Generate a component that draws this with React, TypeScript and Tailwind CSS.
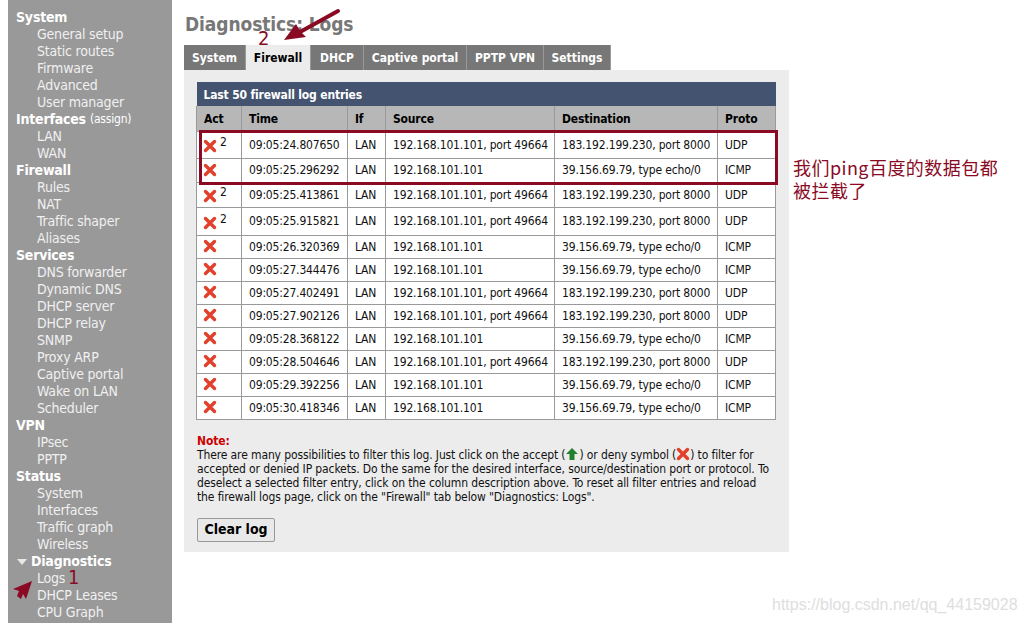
const menu: [string, string[]][] = [
  ["System", ["General setup", "Static routes", "Firmware", "Advanced", "User manager"]],
  ["Interfaces", ["LAN", "WAN"]],
  ["Firewall", ["Rules", "NAT", "Traffic shaper", "Aliases"]],
  ["Services", ["DNS forwarder", "Dynamic DNS", "DHCP server", "DHCP relay", "SNMP", "Proxy ARP", "Captive portal", "Wake on LAN", "Scheduler"]],
  ["VPN", ["IPsec", "PPTP"]],
  ["Status", ["System", "Interfaces", "Traffic graph", "Wireless"]],
  ["Diagnostics", ["Logs", "DHCP Leases", "CPU Graph"]],
];

const tabs = ["System", "Firewall", "DHCP", "Captive portal", "PPTP VPN", "Settings"];
const tabWidths = ["w-[62px]", "w-[65px]", "w-[53px]", "w-[103px]", "w-[77px]", "w-[67px]"];

const UDP_SRC = "192.168.101.101, port 49664";
const UDP_DST = "183.192.199.230, port 8000";
const ICMP_DST = "39.156.69.79, type echo/0";

const rows = [
  { time: "09:05:24.807650", src: UDP_SRC, dst: UDP_DST, proto: "UDP", count: true, h: "h-[27px]" },
  { time: "09:05:25.296292", src: "192.168.101.101", dst: ICMP_DST, proto: "ICMP", count: false, h: "h-[24px]" },
  { time: "09:05:25.413861", src: UDP_SRC, dst: UDP_DST, proto: "UDP", count: true, h: "h-[25px]" },
  { time: "09:05:25.915821", src: UDP_SRC, dst: UDP_DST, proto: "UDP", count: true, h: "h-[28px]" },
  { time: "09:05:26.320369", src: "192.168.101.101", dst: ICMP_DST, proto: "ICMP", count: false, h: "h-[23px]" },
  { time: "09:05:27.344476", src: "192.168.101.101", dst: ICMP_DST, proto: "ICMP", count: false, h: "h-[23px]" },
  { time: "09:05:27.402491", src: UDP_SRC, dst: UDP_DST, proto: "UDP", count: false, h: "h-[23px]" },
  { time: "09:05:27.902126", src: UDP_SRC, dst: UDP_DST, proto: "UDP", count: false, h: "h-[23px]" },
  { time: "09:05:28.368122", src: "192.168.101.101", dst: ICMP_DST, proto: "ICMP", count: false, h: "h-[23px]" },
  { time: "09:05:28.504646", src: UDP_SRC, dst: UDP_DST, proto: "UDP", count: false, h: "h-[23px]" },
  { time: "09:05:29.392256", src: "192.168.101.101", dst: ICMP_DST, proto: "ICMP", count: false, h: "h-[23px]" },
  { time: "09:05:30.418346", src: "192.168.101.101", dst: ICMP_DST, proto: "ICMP", count: false, h: "h-[23px]" },
];

const Deny = ({ className = "" }: { className?: string }) => (
  <svg viewBox="0 0 14 14" className={`w-[14px] h-[14px] ${className}`}>
    <path d="M2.5 2.5 L11.5 11.5 M11.5 2.5 L2.5 11.5" stroke="#e2402a" strokeWidth="3.4" strokeLinecap="round" />
  </svg>
);

const Sidebar = () => (
  <div className="w-[164px] ml-2 h-[623px] bg-[#999999] pt-[9px] shrink-0 overflow-hidden text-[14px] leading-[17px] tracking-[-0.2px] text-[#f0f0f0]">
    {menu.map(([title, items]) => (
      <div key={title}>
        <div className="h-[17px] pl-2 font-bold text-white flex items-center whitespace-nowrap">
          {title === "Diagnostics" && <span className="w-0 h-0 mr-[4px] ml-px border-x-[5px] border-x-transparent border-t-[6px] border-t-[#e8e8e8]" />}
          {title}
          {title === "Interfaces" && <span className="font-normal text-[12px] ml-1">(assign)</span>}
        </div>
        {items.map((item) => (
          <div key={item} className="h-[17px] pl-[29px] whitespace-nowrap">{item}</div>
        ))}
      </div>
    ))}
  </div>
);

const LogTable = () => (
  <table className="w-[579px] table-fixed border-collapse text-[12px] tracking-[-0.17px] text-[#111]">
    <colgroup>
      <col className="w-[45px]" />
      <col className="w-[106px]" />
      <col className="w-[38px]" />
      <col className="w-[169px]" />
      <col className="w-[163px]" />
      <col className="w-[58px]" />
    </colgroup>
    <thead>
      <tr className="h-[24px] bg-[#435370]">
        <th colSpan={6} className="text-left pl-[7px] pt-[2px] text-white font-bold">Last 50 firewall log entries</th>
      </tr>
      <tr className="h-[25px] bg-[#b7b7b7] text-black">
        {["Act", "Time", "If", "Source", "Destination", "Proto"].map((h) => (
          <th key={h} className="text-left pl-[7px] pt-[2px] font-bold border-x border-[#999]">{h}</th>
        ))}
      </tr>
    </thead>
    <tbody className="bg-white">
      {rows.map((r) => (
        <tr key={r.time} className={r.h}>
          <td className="border border-[#999] pl-[6px]">
            <div className="flex items-start">
              <Deny className={r.count ? "mt-[3px]" : "-mt-px"} />
              {r.count && <span className="ml-[3px] -mt-[1px] leading-[14px]">2</span>}
            </div>
          </td>
          <td className="border border-[#999] pl-[7px]">{r.time}</td>
          <td className="border border-[#999] pl-[7px]">LAN</td>
          <td className="border border-[#999] pl-[7px] whitespace-nowrap">{r.src}</td>
          <td className="border border-[#999] pl-[7px] whitespace-nowrap">{r.dst}</td>
          <td className="border border-[#999] pl-[7px]">{r.proto}</td>
        </tr>
      ))}
    </tbody>
  </table>
);

const Annotations = () => (
  <>
    <div className="absolute left-[199px] top-[130px] w-[579px] h-[55px] border-[3px] border-[#8a0a24]" />
    <div className="absolute left-[258px] top-[26px] text-[20px] leading-6 font-light text-[#8a0a24]">2</div>
    <div className="absolute left-[68px] top-[565px] text-[20px] leading-6 font-light text-[#8a0a24]">1</div>
    <svg className="absolute left-[280px] top-[8px] w-[62px] h-[36px]" viewBox="0 0 62 36">
      <path d="M58 3 L20 24" stroke="#8a0a24" strokeWidth="4" strokeLinecap="round" />
      <path d="M4 32 L16 16 L20 23 L26 29 Z" fill="#8a0a24" />
    </svg>
    <svg className="absolute left-[12px] top-[580px] w-[22px] h-[22px]" viewBox="0 0 22 22">
      <path d="M20 1 L1 9 L7 11 L5 16 L9 19 L11 14 L14 19 Z" fill="#8a0a24" />
    </svg>
    <div className="absolute left-[793px] top-[156px] text-[18px] leading-[23px] tracking-[0.45px] text-[#8a0a24] font-['Noto_Sans_CJK_SC',sans-serif] whitespace-nowrap">
      我们ping百度的数据包都<br />被拦截了
    </div>
    <div className="absolute left-[772px] top-[596px] text-[16px] leading-[18px] text-[#dedede] font-['Liberation_Sans',sans-serif] whitespace-nowrap">
      https://blog.csdn.net/qq_44159028
    </div>
  </>
);

export default function App() {
  return (
    <div className="relative flex w-[1026px] h-[623px] overflow-hidden bg-white font-['DejaVu_Sans_Condensed','DejaVu_Sans',sans-serif]">
      <Sidebar />
      <div className="ml-3 w-[605px] shrink-0">
        <h1 className="mt-[12px] h-[25px] pl-px text-[19px] leading-[25px] tracking-[-0.1px] font-bold text-[#777777]">Diagnostics: Logs</h1>
        <div className="flex mt-[8px] h-[25px]">
          {tabs.map((t, i) => (
            <div
              key={t}
              className={`${tabWidths[i]} shrink-0 flex items-center justify-center text-[12px] font-bold border-r border-[#999] ${t === "Firewall" ? "bg-[#ececec] text-black" : "bg-[#777777] text-white"}`}
            >
              {t}
            </div>
          ))}
        </div>
        <div className="bg-[#ececec] h-[482px] pt-3 pl-3">
          <LogTable />
          <div className="mt-[14px] ml-px w-[578px] text-[12px] leading-[14px] tracking-[-0.12px] text-[#111]">
            <div className="font-bold text-[#cc0000]">Note:</div>
            There are many possibilities to filter this log. Just click on the accept (
            <svg viewBox="0 0 14 14" className="inline w-[14px] h-[14px] -mt-[3px]">
              <path d="M7 1 L13 7 L9.5 7 L9.5 13 L4.5 13 L4.5 7 L1 7 Z" fill="#23802c" />
            </svg>
            ) or deny symbol (<Deny className="inline -mt-[3px]" />) to filter for accepted or denied IP packets. Do the same for the desired interface, source/destination port or protocol. To deselect a selected filter entry, click on the column description above. To reset all filter entries and reload the firewall logs page, click on the "Firewall" tab below "Diagnostics: Logs".
          </div>
          <button className="mt-[14px] ml-px w-[78px] h-[24px] rounded-[2px] border border-[#999] bg-[#e9e9e9] text-[14px] font-bold text-black">Clear log</button>
        </div>
      </div>
      <Annotations />
    </div>
  );
}
